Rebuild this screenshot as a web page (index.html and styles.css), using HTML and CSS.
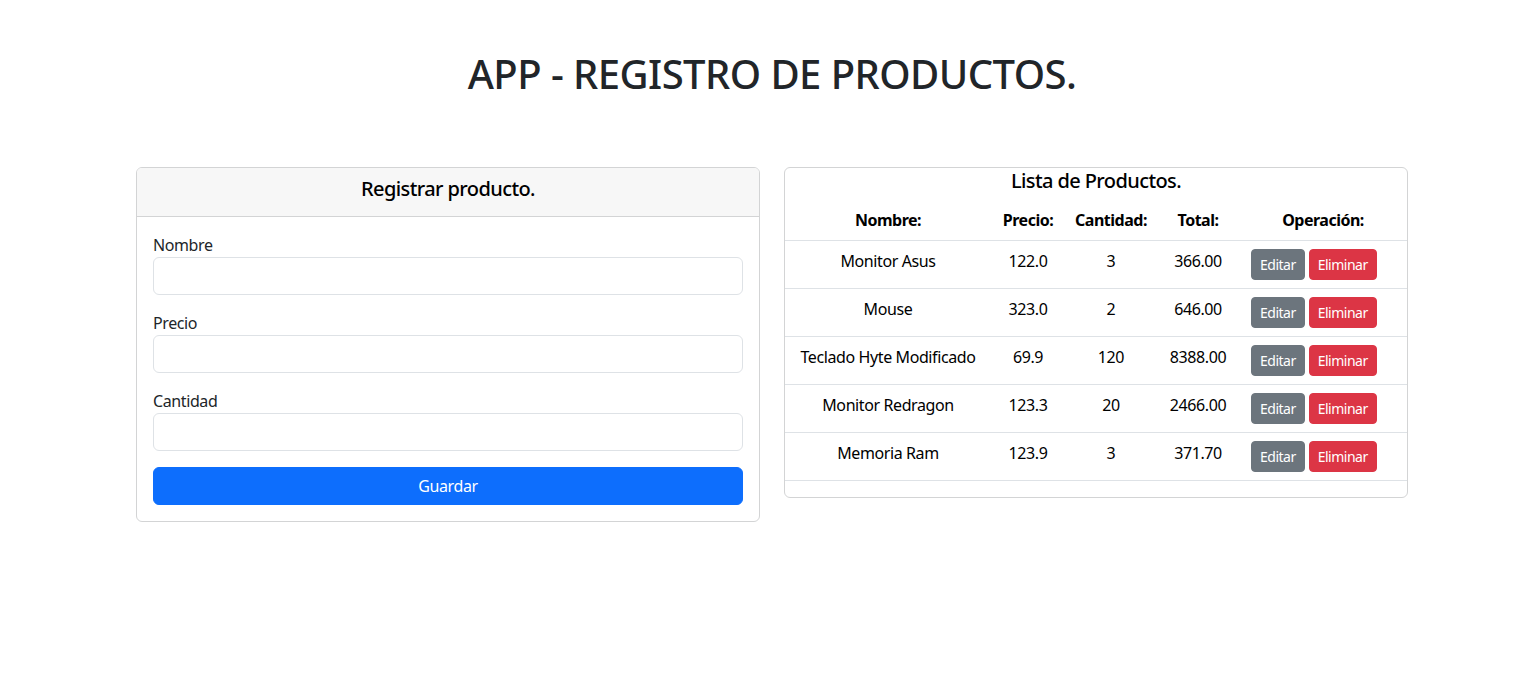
FILE: index.html
```html
<!DOCTYPE html>
<html lang="es">
<head>
<meta charset="utf-8">
<title>App - Registro de productos</title>
<link rel="stylesheet" href="styles.css">
</head>
<body>
<div class="page">
  <h1 class="title">APP - REGISTRO DE PRODUCTOS.</h1>
  <div class="row">
    <div class="card form-card">
      <div class="card-header">Registrar producto.</div>
      <div class="card-body">
        <div class="group">
          <label class="label">Nombre</label>
          <input class="input" type="text">
        </div>
        <div class="group">
          <label class="label">Precio</label>
          <input class="input" type="text">
        </div>
        <div class="group">
          <label class="label">Cantidad</label>
          <input class="input" type="text">
        </div>
        <button class="btn btn-primary">Guardar</button>
      </div>
    </div>
    <div class="card list-card">
      <h5 class="list-title">Lista de Productos.</h5>
      <table class="table">
        <colgroup>
          <col class="c1"><col class="c2"><col class="c3"><col class="c4"><col class="c5">
        </colgroup>
        <thead>
          <tr><th>Nombre:</th><th>Precio:</th><th>Cantidad:</th><th>Total:</th><th>Operación:</th></tr>
        </thead>
        <tbody>
          <tr><td>Monitor Asus</td><td>122.0</td><td>3</td><td>366.00</td><td class="ops"><div class="btns"><button class="btn btn-sm btn-secondary">Editar</button><button class="btn btn-sm btn-danger">Eliminar</button></div></td></tr>
          <tr><td>Mouse</td><td>323.0</td><td>2</td><td>646.00</td><td class="ops"><div class="btns"><button class="btn btn-sm btn-secondary">Editar</button><button class="btn btn-sm btn-danger">Eliminar</button></div></td></tr>
          <tr><td>Teclado Hyte Modificado</td><td>69.9</td><td>120</td><td>8388.00</td><td class="ops"><div class="btns"><button class="btn btn-sm btn-secondary">Editar</button><button class="btn btn-sm btn-danger">Eliminar</button></div></td></tr>
          <tr><td>Monitor Redragon</td><td>123.3</td><td>20</td><td>2466.00</td><td class="ops"><div class="btns"><button class="btn btn-sm btn-secondary">Editar</button><button class="btn btn-sm btn-danger">Eliminar</button></div></td></tr>
          <tr><td>Memoria Ram</td><td>123.9</td><td>3</td><td>371.70</td><td class="ops"><div class="btns"><button class="btn btn-sm btn-secondary">Editar</button><button class="btn btn-sm btn-danger">Eliminar</button></div></td></tr>
        </tbody>
      </table>
    </div>
  </div>
</div>
</body>
</html>
```
FILE: styles.css
```css
* { box-sizing: border-box; }
html, body { margin: 0; padding: 0; background: #fff; }
body {
  font-family: "Noto Sans", "Open Sans", sans-serif;
  font-size: 16px;
  line-height: 1.5;
  color: #212529;
  letter-spacing: -0.4px;
}
.page {
  width: 1272px;
  margin-left: 136px;
  padding-top: 50px;
}
.title {
  margin: 0 0 69px;
  font-size: 40px;
  line-height: 48px;
  font-weight: 500;
  text-align: center;
  color: #212529;
  letter-spacing: -0.55px;
}
.row {
  display: flex;
  align-items: flex-start;
  gap: 24px;
}
.card {
  border: 1px solid #d3d4d5;
  border-radius: 6px;
  background: #fff;
}
.form-card { width: 624px; }
.list-card { width: 624px; }
.card-header {
  background: #f7f7f7;
  border-bottom: 1px solid #d3d4d5;
  border-radius: 5px 5px 0 0;
  height: 49px;
  padding: 6px 16px 12px;
  font-size: 20px;
  line-height: 30px;
  font-weight: 500;
  text-align: center;
  color: #000;
  letter-spacing: -0.6px;
}
.card-body { padding: 16px; }
.group { margin-bottom: 16px; }
.label { display: block; line-height: 24px; }
.input {
  display: block;
  width: 100%;
  height: 38px;
  border: 1px solid #dee2e6;
  border-radius: 6px;
  font: inherit;
  padding: 6px 12px;
}
.btn {
  display: inline-block;
  border: 1px solid transparent;
  font-family: inherit;
  color: #fff;
  cursor: pointer;
}
.btn-primary {
  display: block;
  width: 100%;
  height: 38px;
  background: #0d6efd;
  border-color: #0d6efd;
  border-radius: 6px;
  font-size: 16px;
  line-height: 24px;
  padding: 6px 12px;
  letter-spacing: -0.4px;
}
.list-title {
  margin: 0 0 7px;
  padding-top: 1px;
  font-size: 20px;
  line-height: 24px;
  font-weight: 500;
  text-align: center;
  color: #000;
  letter-spacing: -0.6px;
}
.table {
  width: 100%;
  border-collapse: collapse;
  table-layout: fixed;
  margin-bottom: 16px;
  color: #000;
}
.c1 { width: 206px; }
.c2 { width: 74px; }
.c3 { width: 92px; }
.c4 { width: 82px; }
.c5 { width: 168px; }
.table th, .table td {
  padding: 8px;
  text-align: center;
  border-bottom: 1px solid #dee2e6;
  white-space: nowrap;
  vertical-align: top;
}
.table th { font-weight: 700; line-height: 24px; letter-spacing: -0.5px; }
.table td { line-height: 23px; padding-top: 9px; padding-bottom: 7px; }
.table td.ops { padding: 8px 8px 8px 12px; text-align: left; }
.btns { display: flex; gap: 4px; }
.btn-sm {
  height: 31px;
  font-size: 14px;
  line-height: 21px;
  padding: 4px 8px;
  border-radius: 4px;
  letter-spacing: -0.5px;
}
.btn-secondary { background: #6c757d; border-color: #6c757d; }
.btn-danger { background: #dc3545; border-color: #dc3545; }
```
